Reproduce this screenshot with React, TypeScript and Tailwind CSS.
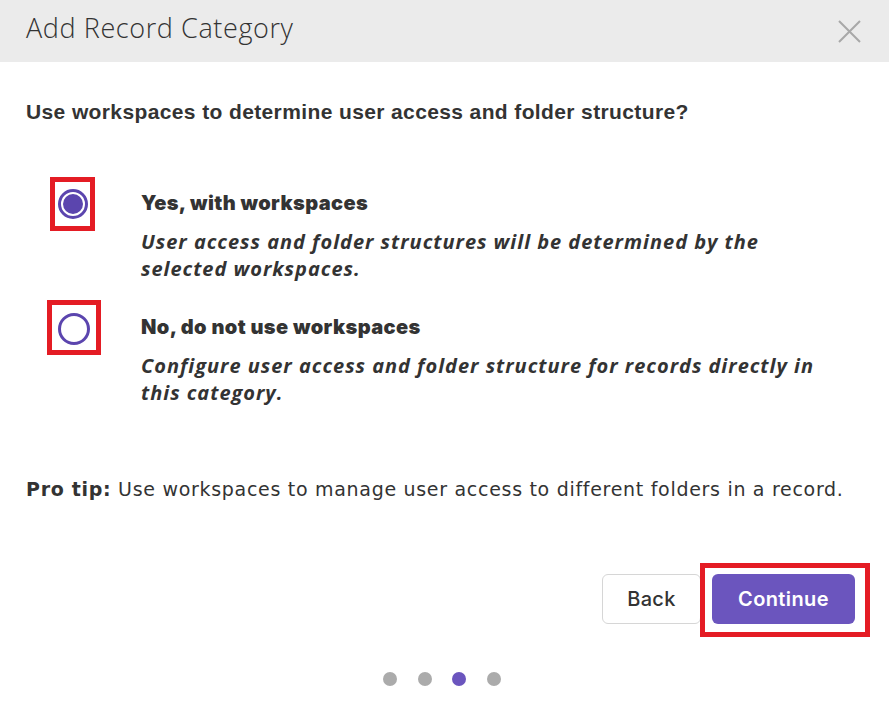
import React from 'react';

function Radio({ checked, size }: { checked: boolean; size: 'sm' | 'md' }) {
  return (
    <span
      className={
        'flex items-center justify-center rounded-full border-[3px] border-[#5b45ae] bg-white ' +
        (size === 'sm' ? 'h-[30px] w-[30px]' : 'h-[32px] w-[32px]')
      }
    >
      {checked && <span className="h-[20px] w-[20px] rounded-full bg-[#5b45ae]" />}
    </span>
  );
}

interface OptionProps {
  checked: boolean;
  title: string;
  description: string;
  size: 'sm' | 'md';
  boxClass: string;
}

function Option({ checked, title, description, size, boxClass }: OptionProps) {
  return (
    <div className="flex items-start">
      <div className="flex w-[115px] justify-start pl-[32px]">
        <div className="relative mt-[-1px]">
          <Radio checked={checked} size={size} />
          {/* annotation box */}
          <span className={'pointer-events-none absolute border-[5px] border-[#e41c24] ' + boxClass} />
        </div>
      </div>
      <div className="flex-1 pr-[50px]">
        <div className="font-['Inter',sans-serif] text-[20px] font-black leading-[26px] tracking-[0.4px] text-[#333333]">
          {title}
        </div>
        <div className="mt-[12px] font-['Open_Sans',sans-serif] text-[20px] font-bold italic leading-[27px] tracking-[0.97px] text-[#333333]">
          {description}
        </div>
      </div>
    </div>
  );
}

export default function App() {
  return (
    <div className="h-[706px] w-[889px] overflow-hidden bg-white text-[#333333]">
      {/* Header */}
      <header className="flex h-[62px] items-center justify-between bg-[#ebebeb] pl-[26px] pr-[28px]">
        <h1 className="pb-[7px] font-['Open_Sans',sans-serif] text-[27px] font-light leading-none tracking-[0.6px] text-[#333333]">
          Add Record Category
        </h1>
        <button aria-label="Close" className="text-[#a8a8a8]">
          <svg width="23" height="23" viewBox="0 0 23 23" fill="none" stroke="currentColor" strokeWidth={2}>
            <path d="M1 1l21 21M22 1L1 22" />
          </svg>
        </button>
      </header>

      <div className="px-[26px] pt-[37px]">
        <p className="font-['Liberation_Sans_Narrow','Liberation_Sans',sans-serif] text-[21px] font-bold leading-[26px] tracking-[0.38px] text-[#333333]">
          Use workspaces to determine user access and folder structure?
        </p>
      </div>

      <div className="mt-[65px] flex flex-col gap-[32px] pl-[26px]">
        <Option
          checked
          size="sm"
          title="Yes, with workspaces"
          description="User access and folder structures will be determined by the selected workspaces."
          boxClass="-left-[8px] -right-[7px] -top-[12px] -bottom-[12px]"
        />
        <Option
          checked={false}
          size="md"
          title="No, do not use workspaces"
          description="Configure user access and folder structure for records directly in this category."
          boxClass="-left-[11px] -right-[11px] -top-[13px] -bottom-[10px]"
        />
      </div>

      <p className="mt-[70px] whitespace-nowrap px-[26px] font-['DejaVu_Sans',sans-serif] text-[19px] leading-[26px] tracking-[0.7px] text-[#333333]">
        <span className="font-bold">Pro tip:</span> Use workspaces to manage user access to different folders in a record.
      </p>

      <div className="mt-[72px] flex justify-end gap-[11px] pr-[34px]">
        <button className="h-[50px] w-[99px] rounded-[6px] border border-[#d6d6d6] bg-white font-['Inter',sans-serif] text-[20px] font-medium tracking-[0.3px] text-[#333333]">
          Back
        </button>
        <div className="relative">
          <button className="h-[50px] w-[143px] rounded-[6px] bg-[#6b55be] font-['Inter',sans-serif] text-[20px] font-semibold tracking-[0.4px] text-white">
            Continue
          </button>
          <span className="pointer-events-none absolute -left-[12px] -right-[15px] -top-[11px] -bottom-[13px] border-[5px] border-[#e41c24]" />
        </div>
      </div>

      <div className="mt-[48px] flex justify-center gap-[20.5px] pr-[5px]">
        <span className="h-[14px] w-[14px] rounded-full bg-[#ababab]" />
        <span className="h-[14px] w-[14px] rounded-full bg-[#ababab]" />
        <span className="h-[14px] w-[14px] rounded-full bg-[#6b55be]" />
        <span className="h-[14px] w-[14px] rounded-full bg-[#ababab]" />
      </div>
    </div>
  );
}
